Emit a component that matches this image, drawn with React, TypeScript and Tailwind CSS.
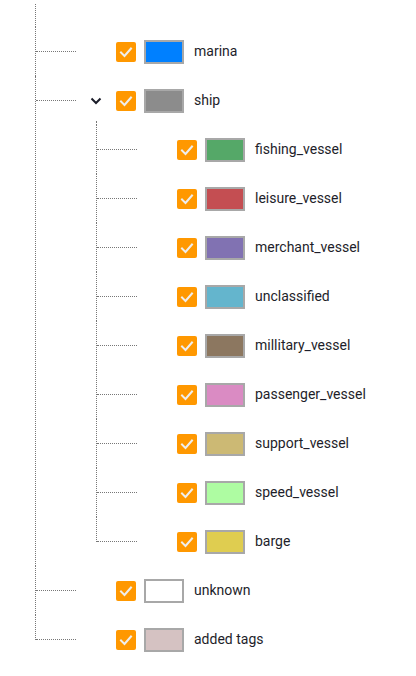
import React from 'react';

interface TagNode {
  label: string;
  color: string;
  children?: TagNode[];
}

const tags: TagNode[] = [
  { label: 'marina', color: '#0080ff' },
  {
    label: 'ship',
    color: '#8c8c8c',
    children: [
      { label: 'fishing_vessel', color: '#55a868' },
      { label: 'leisure_vessel', color: '#c44e52' },
      { label: 'merchant_vessel', color: '#8172b2' },
      { label: 'unclassified', color: '#64b5cd' },
      { label: 'millitary_vessel', color: '#8c7760' },
      { label: 'passenger_vessel', color: '#da8bc3' },
      { label: 'support_vessel', color: '#ccb974' },
      { label: 'speed_vessel', color: '#aefca2' },
      { label: 'barge', color: '#dfcd50' },
    ],
  },
  { label: 'unknown', color: '#ffffff' },
  { label: 'added tags', color: '#d5c2c2' },
];

const Checkbox = () => (
  <div className="flex h-5 w-5 shrink-0 items-center justify-center rounded-[2px] bg-[#ff9800]">
    <svg width="20" height="20" viewBox="0 0 20 20" fill="none">
      <path d="M5 10.5L8.5 14L15 6.5" stroke="#eeeeee" strokeWidth="2" strokeLinecap="square" />
    </svg>
  </div>
);

const Chevron = () => (
  <svg width="12" height="8" viewBox="0 0 12 8" fill="none">
    <path d="M1.5 1.5L6 6L10.5 1.5" stroke="#1b1d2a" strokeWidth="2" />
  </svg>
);

const TreeItem = ({ node, last }: { node: TagNode; last: boolean }) => (
  <li className="flex">
    {last ? (
      <div className="w-px shrink-0">
        <div className="h-[25px] border-l border-dotted border-[#777]" />
      </div>
    ) : (
      <div className="w-px shrink-0 border-l border-dotted border-[#777]" />
    )}
    <div className="flex flex-col">
      <div className="flex h-[49px] items-center">
        <div className="w-10 border-t border-dotted border-[#777]" />
        <div className="flex w-10 items-center justify-center">
          {node.children && <Chevron />}
        </div>
        <Checkbox />
        <div
          className="ml-2 h-6 w-10 shrink-0 border-2 border-[#a8a8a8]"
          style={{ backgroundColor: node.color }}
        />
        <span className="ml-[10px] whitespace-nowrap text-[14px] text-[#1e1e2a]">{node.label}</span>
      </div>
      {node.children && (
        <div className="ml-[60px] -mt-1 flex flex-col">
          <div className="h-1 border-l border-dotted border-[#777]" />
          <ul>
            {node.children.map((c, i) => (
              <TreeItem key={c.label} node={c} last={i === node.children!.length - 1} />
            ))}
          </ul>
        </div>
      )}
    </div>
  </li>
);

export default function App() {
  return (
    <div
      className="h-[676px] w-[416px] overflow-hidden bg-white pl-[35px] pt-1"
      style={{ fontFamily: 'Roboto, "Noto Sans", sans-serif' }}
    >
      <div className="h-[23px] border-l border-dotted border-[#777]" />
      <ul>
        {tags.map((t, i) => (
          <TreeItem key={t.label} node={t} last={i === tags.length - 1} />
        ))}
      </ul>
    </div>
  );
}
